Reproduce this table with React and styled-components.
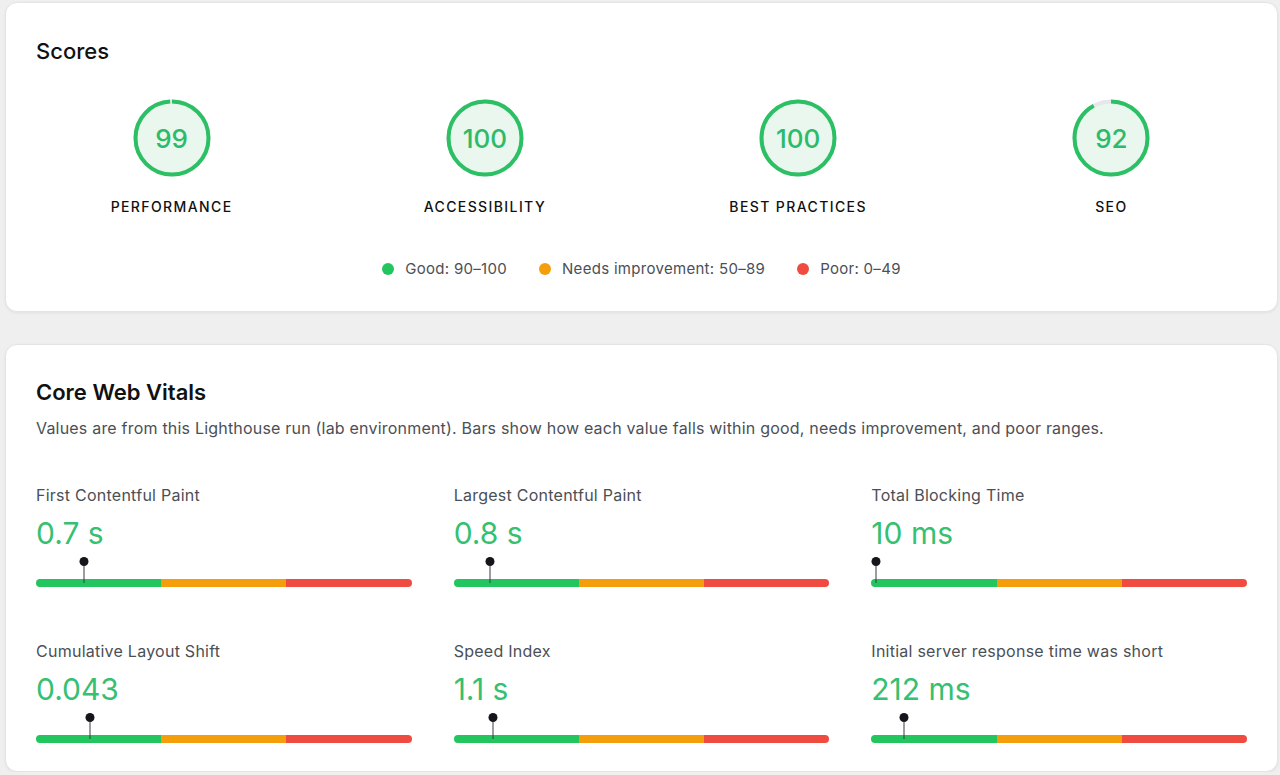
import React from "react";
import styled, { createGlobalStyle } from "styled-components";

const GlobalStyle = createGlobalStyle`
  html, body { margin: 0; padding: 0; background: #efefef; }
  body { font-family: Inter, "Noto Sans", sans-serif; -webkit-font-smoothing: antialiased; }
  * { box-sizing: border-box; }
`;

const Page = styled.div`
  padding: 2px 2px 0 5px;
  display: flex;
  flex-direction: column;
  gap: 32px;
`;

const Card = styled.section`
  background: #fff;
  border: 1px solid #e4e4e4;
  border-radius: 12px;
  box-shadow: 0 1px 3px rgba(0, 0, 0, 0.06);
  padding: ${(p) => p.$pad};
`;

const Title = styled.h2`
  margin: 0;
  font-size: 22px;
  line-height: 28px;
  font-weight: ${(p) => p.$weight || 500};
  color: #111;
`;

const GaugeGrid = styled.div`
  margin-top: 34px;
  display: grid;
  grid-template-columns: repeat(4, 1fr);
  column-gap: 42px;
`;

const GaugeCol = styled.div`
  display: flex;
  flex-direction: column;
  align-items: center;
`;

const GaugeBox = styled.div`
  position: relative;
  width: 78px;
  height: 78px;
`;

const GaugeNum = styled.span`
  position: absolute;
  inset: 0;
  display: flex;
  align-items: center;
  justify-content: center;
  font-size: 26px;
  font-weight: 500;
  color: #2dba69;
`;

const GaugeLabel = styled.div`
  margin-top: 20px;
  font-size: 14px;
  line-height: 20px;
  font-weight: 500;
  letter-spacing: 0.1em;
  color: #111;
`;

const Legend = styled.div`
  margin-top: 42px;
  display: flex;
  justify-content: center;
  gap: 32px;
`;

const LegendItem = styled.div`
  display: flex;
  align-items: center;
  gap: 11px;
  font-size: 15px;
  letter-spacing: 0.3px;
  line-height: 20px;
  color: #4b4f56;
`;

const Dot = styled.span`
  width: 12px;
  height: 12px;
  border-radius: 50%;
  background: ${(p) => p.$c};
`;

const Desc = styled.p`
  margin: 11px 0 0;
  font-size: 16px;
  letter-spacing: 0.2px;
  line-height: 22px;
  color: #4b4f56;
`;

const MetricGrid = styled.div`
  margin-top: 44px;
  display: grid;
  grid-template-columns: repeat(3, 1fr);
  column-gap: 42px;
  row-gap: 52px;
`;

const Metric = styled.div`
  display: flex;
  flex-direction: column;
`;

const MetricLabel = styled.div`
  font-size: 16px;
  letter-spacing: 0.25px;
  line-height: 24px;
  color: #4b4f56;
`;

const MetricValue = styled.div`
  margin-top: 8px;
  font-size: 30px;
  line-height: 36px;
  color: #35c072;
`;

const Track = styled.div`
  position: relative;
  margin-top: 28px;
  height: 8px;
  border-radius: 4px;
  display: grid;
  grid-template-columns: 1fr 1fr 1fr;
`;

const Seg = styled.div`
  background: ${(p) => p.$c};
  border-radius: ${(p) => (p.$first ? "4px 0 0 4px" : p.$last ? "0 4px 4px 0" : "0")};
`;

const Marker = styled.div`
  position: absolute;
  bottom: 4px;
  width: 9px;
  height: 26px;
  transform: translateX(-50%);
  display: flex;
  flex-direction: column;
  align-items: center;
  &::before {
    content: "";
    width: 9px;
    height: 9px;
    border-radius: 50%;
    background: #14161c;
    flex: none;
  }
  &::after {
    content: "";
    width: 1px;
    flex: 1;
    background: #3a3d44;
  }
`;

const GREEN = "#22c55e";
const ORANGE = "#f59e0b";
const RED = "#f04b40";

function Gauge({ score, label }) {
  const r = 36.5;
  const c = 2 * Math.PI * r;
  return (
    <GaugeCol>
      <GaugeBox>
        <svg width="78" height="78" viewBox="0 0 78 78">
          <circle cx="39" cy="39" r={r} fill="#e9f7ee" stroke="#e6e7ea" strokeWidth="4" />
          <circle
            cx="39"
            cy="39"
            r={r}
            fill="none"
            stroke="#2cc065"
            strokeWidth="4"
            strokeDasharray={`${(c * score) / 100} ${c}`}
            transform="rotate(-90 39 39)"
          />
        </svg>
        <GaugeNum>{score}</GaugeNum>
      </GaugeBox>
      <GaugeLabel>{label}</GaugeLabel>
    </GaugeCol>
  );
}

const metrics = [
  { label: "First Contentful Paint", value: "0.7 s", pos: 12.8 },
  { label: "Largest Contentful Paint", value: "0.8 s", pos: 9.8 },
  { label: "Total Blocking Time", value: "10 ms", pos: 1.3 },
  { label: "Cumulative Layout Shift", value: "0.043", pos: 14.4 },
  { label: "Speed Index", value: "1.1 s", pos: 10.6 },
  { label: "Initial server response time was short", value: "212 ms", pos: 8.8 },
];

export default function App() {
  return (
    <>
      <GlobalStyle />
      <Page>
        <Card $pad="34px 30px 32px 30px">
          <Title>Scores</Title>
          <GaugeGrid>
            <Gauge score={99} label="PERFORMANCE" />
            <Gauge score={100} label="ACCESSIBILITY" />
            <Gauge score={100} label="BEST PRACTICES" />
            <Gauge score={92} label="SEO" />
          </GaugeGrid>
          <Legend>
            <LegendItem>
              <Dot $c={GREEN} />
              Good: 90–100
            </LegendItem>
            <LegendItem>
              <Dot $c={ORANGE} />
              Needs improvement: 50–89
            </LegendItem>
            <LegendItem>
              <Dot $c={RED} />
              Poor: 0–49
            </LegendItem>
          </Legend>
        </Card>
        <Card $pad="33px 30px 28px 30px">
          <Title $weight={600}>Core Web Vitals</Title>
          <Desc>
            Values are from this Lighthouse run (lab environment). Bars show how each value falls within good, needs
            improvement, and poor ranges.
          </Desc>
          <MetricGrid>
            {metrics.map((m) => (
              <Metric key={m.label}>
                <MetricLabel>{m.label}</MetricLabel>
                <MetricValue>{m.value}</MetricValue>
                <Track>
                  <Seg $c={GREEN} $first />
                  <Seg $c={ORANGE} />
                  <Seg $c={RED} $last />
                  <Marker style={{ left: `${m.pos}%` }} />
                </Track>
              </Metric>
            ))}
          </MetricGrid>
        </Card>
      </Page>
    </>
  );
}
